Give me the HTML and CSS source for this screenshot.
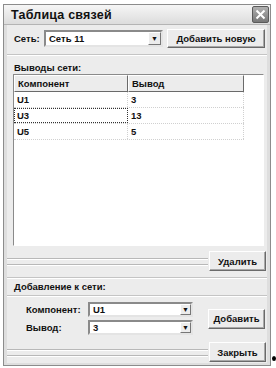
FILE: index.html
```html
<!DOCTYPE html>
<html lang="ru">
<head>
    <meta charset="UTF-8">
    <title>Таблица связей</title>
    <link rel="stylesheet" href="styles.css">
</head>
<body>
    <div class="window">
        <div class="titlebar">
            <span class="title">Таблица связей</span>
            <div class="close">
                <svg width="11" height="11" viewBox="0 0 11 11"><path d="M1.5 1.5 L9.5 9.5 M9.5 1.5 L1.5 9.5" stroke="#fff" stroke-width="2"/></svg>
            </div>
        </div>
        <div class="body">
            <!-- Net selection -->
            <div class="net-row">
                <span class="label">Сеть:</span>
                <div class="combo net-combo"><span class="value">Сеть 11</span><span class="arrow">▼</span></div>
                <button class="btn btn-new">Добавить новую</button>
            </div>
            <div class="sep"></div>

            <div class="section-title">Выводы сети:</div>
            <div class="list">
                <div class="list-head">
                    <div class="col c1">Компонент</div>
                    <div class="col c2">Вывод</div>
                </div>
                <div class="list-row"><div class="cell c1">U1</div><div class="cell c2">3</div></div>
                <div class="list-row"><div class="cell c1 focus">U3</div><div class="cell c2">13</div></div>
                <div class="list-row"><div class="cell c1">U5</div><div class="cell c2">5</div></div>
            </div>
            <div class="action-row">
                <div class="grip"></div>
                <button class="btn">Удалить</button>
            </div>
            <div class="sep"></div>

            <div class="section-title second">Добавление к сети:</div>
            <div class="sep light"></div>
            <div class="add-row">
                <div class="fields">
                    <span class="label">Компонент:</span>
                    <div class="combo small"><span class="value">U1</span><span class="arrow">▼</span></div>
                    <span class="label">Вывод:</span>
                    <div class="combo small"><span class="value">3</span><span class="arrow">▼</span></div>
                </div>
                <button class="btn">Добавить</button>
            </div>
            <div class="action-row bottom">
                <div class="grip"></div>
                <button class="btn">Закрыть</button>
            </div>
        </div>
    </div>
    <span class="dot"></span>
</body>
</html>
```

FILE: styles.css
```css
body {
    margin: 0;
    padding: 4px 0 0 3px;
    background: #fff;
    font-family: 'Liberation Sans', Arial, sans-serif;
    font-weight: bold;
    font-size: 9.5px;
    color: #111;
    display: flex;
    align-items: flex-start;
}
.window {
    width: 266px;
    border: 1px solid #8c8c8c;
    background: #dedede;
}
.titlebar {
    height: 19px;
    display: flex;
    align-items: center;
    justify-content: space-between;
    padding: 0 1px 0 7px;
    background: linear-gradient(#f6f6f6, #dcdcdc);
    border-bottom: 1px solid #b4b4b4;
}
.title {
    font-size: 12.5px;
    letter-spacing: 0.2px;
}
.close {
    width: 15px;
    height: 15px;
    border: 1px solid #5a5a5a;
    border-radius: 2px;
    background: linear-gradient(#b0b0b0, #777);
    display: flex;
    align-items: center;
    justify-content: center;
}
.body {
    margin: 0 3px 2px 3px;
    padding: 4px 1px 0 7px;
    background: #ececec;
}
.label {
    white-space: nowrap;
}
.net-row {
    display: flex;
    align-items: center;
    height: 19px;
}
.net-row .label {
    width: 30px;
}
.combo {
    height: 13px;
    display: flex;
    align-items: center;
    justify-content: space-between;
    background: #fff;
    border: 2px solid;
    border-color: #8a8a8a #e4e4e4 #e4e4e4 #8a8a8a;
}
.combo .value {
    padding-left: 3px;
}
.arrow {
    width: 13px;
    height: 13px;
    display: flex;
    align-items: center;
    justify-content: center;
    font-size: 7px;
    background: #ececec;
    border: 1px solid;
    border-color: #fff #777 #777 #fff;
    box-sizing: border-box;
}
.combo.small {
    height: 11px;
}
.combo.small .arrow {
    height: 11px;
    width: 11px;
}
.net-combo {
    width: 115px;
    margin-right: 4px;
}
.btn {
    font-family: inherit;
    font-weight: bold;
    font-size: 9.5px;
    color: #111;
    height: 20px;
    padding: 0;
    width: 57px;
    background: #ececec;
    border: 1px solid;
    border-color: #fff #6a6a6a #6a6a6a #fff;
    box-shadow: inset -1px -1px 0 #a8a8a8;
}
.btn-new {
    width: 98px;
    height: 19px;
}
.sep {
    height: 0;
    border-top: 1px solid #c4c4c4;
    border-bottom: 1px solid #fff;
    margin: 6px -1px 0 -7px;
}
.sep.light {
    margin-top: 2px;
}
.section-title {
    height: 12px;
    line-height: 12px;
    margin-top: 6px;
}
.section-title.second {
    margin-top: 2px;
}
.list {
    height: 170px;
    margin-left: -1px;
    margin-right: 2px;
    background: #fff;
    border: 1px solid;
    border-color: #8a8a8a #fff #fff #8a8a8a;
}
.list-head {
    display: flex;
    height: 17px;
}
.col {
    box-sizing: border-box;
    height: 17px;
    line-height: 15px;
    padding-left: 3px;
    background: #ececec;
    border: 1px solid;
    border-color: #fff #6a6a6a #6a6a6a #fff;
}
.c1 {
    width: 114px;
}
.c2 {
    width: 116px;
}
.list-row {
    display: flex;
    width: 230px;
    height: 16px;
    border-bottom: 1px dotted #d0d0d0;
    box-sizing: border-box;
}
.cell {
    box-sizing: border-box;
    line-height: 15px;
    padding-left: 3px;
    border-right: 1px dotted #d0d0d0;
}
.cell.focus {
    border: 1px dotted #333;
    line-height: 13px;
    padding-left: 2px;
}
.action-row {
    display: flex;
    align-items: center;
    margin-top: 5px;
}
.grip {
    flex: 1;
    height: 5px;
    margin-left: -7px;
    margin-right: 1px;
    border-top: 1px solid #b8b8b8;
    border-bottom: 1px solid #b8b8b8;
    box-shadow: inset 0 1px 0 #fff, 0 1px 0 #fff;
}
.add-row {
    display: flex;
    align-items: center;
    margin-top: 5px;
}
.fields {
    display: grid;
    grid-template-columns: 62px 105px;
    row-gap: 3px;
    align-items: center;
    margin-left: 12px;
    margin-right: 15px;
}
.action-row.bottom {
    margin-top: 7px;
    padding-bottom: 1px;
}
.dot {
    width: 4px;
    height: 5px;
    margin: 352px 0 0 1px;
    border-radius: 50%;
    background: #000;
}
```
